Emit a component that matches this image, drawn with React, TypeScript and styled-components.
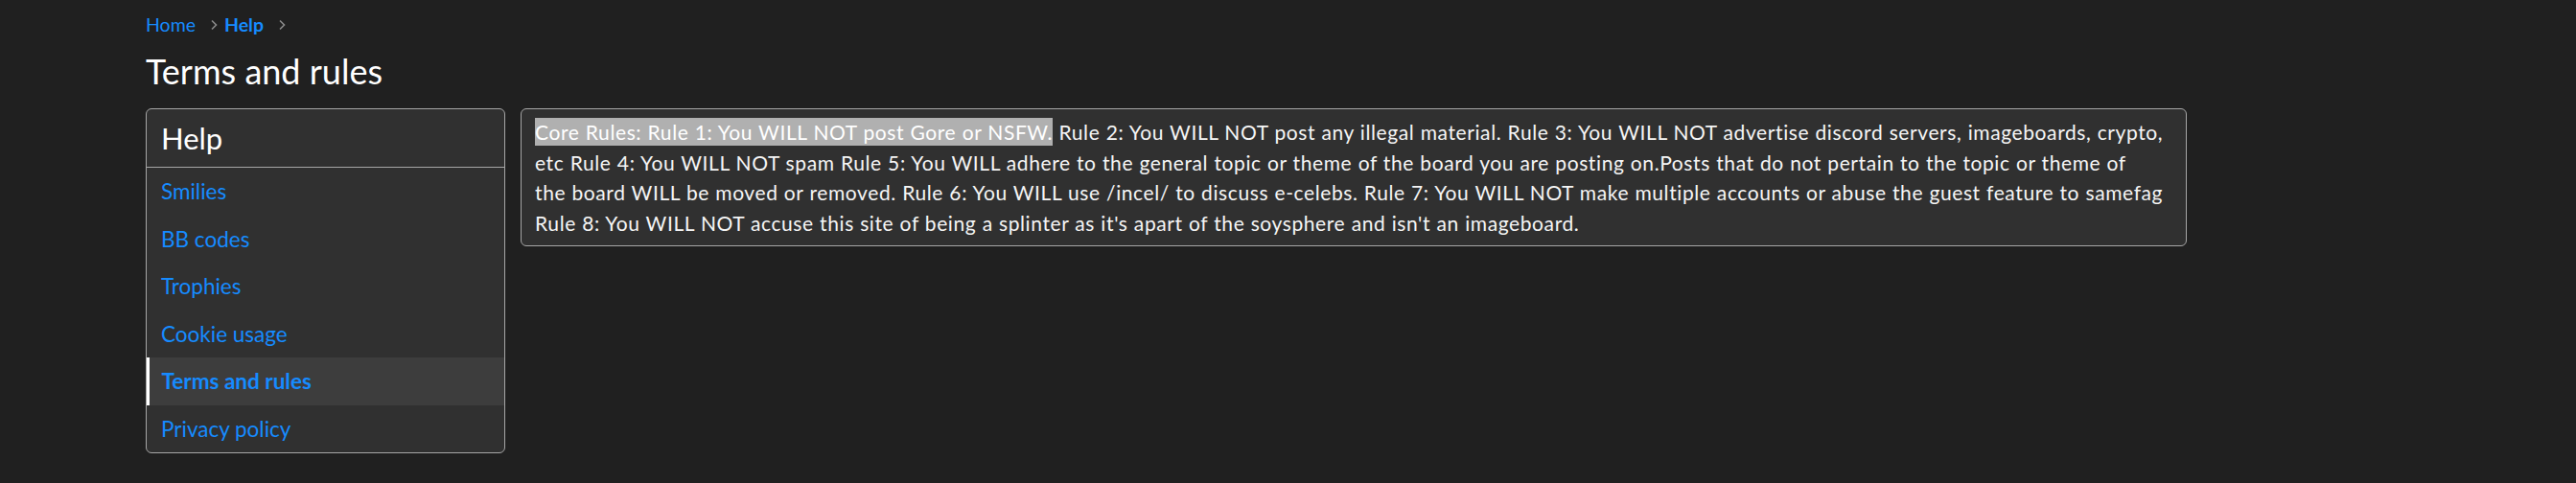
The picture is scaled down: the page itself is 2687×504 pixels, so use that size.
import React from 'react';
import styled, { createGlobalStyle } from 'styled-components';

const GlobalStyle = createGlobalStyle`
  html, body {
    margin: 0;
    padding: 0;
    background: #202020;
  }
  body {
    font-family: Lato, "Open Sans", sans-serif;
    color: #f2f2f2;
  }
`;

const Page = styled.div`
  width: 2129px;
  padding: 12px 0 0 152px;
`;

const Breadcrumbs = styled.ul`
  display: flex;
  align-items: center;
  list-style: none;
  margin: 0;
  padding: 0;
  font-size: 19.5px;
  line-height: 27px;
`;

const Crumb = styled.li<{ $current?: boolean }>`
  display: flex;
  align-items: center;
  margin-right: 7px;

  a {
    color: #168bff;
    text-decoration: none;
    font-weight: ${({ $current }) => ($current ? 700 : 400)};
  }

  svg {
    margin-left: 15px;
  }
`;

const Title = styled.h1`
  margin: 13px 0 0;
  font-size: 36px;
  line-height: 44px;
  font-weight: 400;
  color: #fff;
`;

const Body = styled.div`
  display: flex;
  align-items: flex-start;
  gap: 16px;
  margin-top: 17px;
`;

const Sidebar = styled.nav`
  width: 375px;
  box-sizing: border-box;
  background: #303030;
  border: 1px solid #a6a6a6;
  border-radius: 6px;
  overflow: hidden;
`;

const SideHeader = styled.h3`
  margin: 0;
  padding: 0 15px;
  height: 60px;
  font-size: 31px;
  line-height: 60px;
  font-weight: 400;
  color: #fff;
  border-bottom: 1px solid #a6a6a6;
`;

const SideLink = styled.a<{ $active?: boolean }>`
  display: block;
  height: 49.5px;
  padding: 0 15px;
  font-size: 22.5px;
  line-height: 49.5px;
  color: #168bff;
  text-decoration: none;
  ${({ $active }) =>
    $active &&
    `
    margin-left: -1px;
    padding-left: 12.5px;
    border-left: 4.5px solid #fff;
    background: #3d3d3d;
    font-weight: 700;
  `}
`;

const RulesBox = styled.div`
  flex: 1;
  box-sizing: border-box;
  background: #303030;
  border: 1px solid #a6a6a6;
  border-radius: 6px;
  padding: 8px 14px;
  font-size: 21px;
  line-height: 31.5px;
  letter-spacing: 0.6px;
  word-spacing: 0.35px;
  color: #f5f5f5;
`;

// the first sentence is shown as selected text in the reference
const Selected = styled.span`
  background: #b0b0b0;
  box-shadow: 0 2px 0 #b0b0b0, 0 -2px 0 #b0b0b0;
  color: #fff;
`;

const Chevron = () => (
  <svg width="8" height="12" viewBox="0 0 8 12" fill="none">
    <path d="M2 1.5l4.5 4.5L2 10.5" stroke="#8a8a8a" strokeWidth="1.6" />
  </svg>
);

const links = ['Smilies', 'BB codes', 'Trophies', 'Cookie usage', 'Terms and rules', 'Privacy policy'];

export default function App() {
  return (
    <>
      <GlobalStyle />
      <Page>
        <Breadcrumbs>
          <Crumb>
            <a href="#">Home</a>
            <Chevron />
          </Crumb>
          <Crumb $current>
            <a href="#">Help</a>
            <Chevron />
          </Crumb>
        </Breadcrumbs>
        <Title>Terms and rules</Title>
        <Body>
          <Sidebar>
            <SideHeader>Help</SideHeader>
            {links.map((l) => (
              <SideLink key={l} href="#" $active={l === 'Terms and rules'}>
                {l}
              </SideLink>
            ))}
          </Sidebar>
          <RulesBox>
            <Selected>Core Rules: Rule 1: You WILL NOT post Gore or NSFW.</Selected> Rule 2: You WILL NOT post any
            illegal material. Rule 3: You WILL NOT advertise discord servers, imageboards, crypto,
            <br />
            etc Rule 4: You WILL NOT spam Rule 5: You WILL adhere to the general topic or theme of the board you are
            posting on.Posts that do not pertain to the topic or theme of
            <br />
            the board WILL be moved or removed. Rule 6: You WILL use /incel/ to discuss e-celebs. Rule 7: You WILL NOT
            make multiple accounts or abuse the guest feature to samefag
            <br />
            Rule 8: You WILL NOT accuse this site of being a splinter as it's apart of the soysphere and isn't an
            imageboard.
          </RulesBox>
        </Body>
      </Page>
    </>
  );
}
